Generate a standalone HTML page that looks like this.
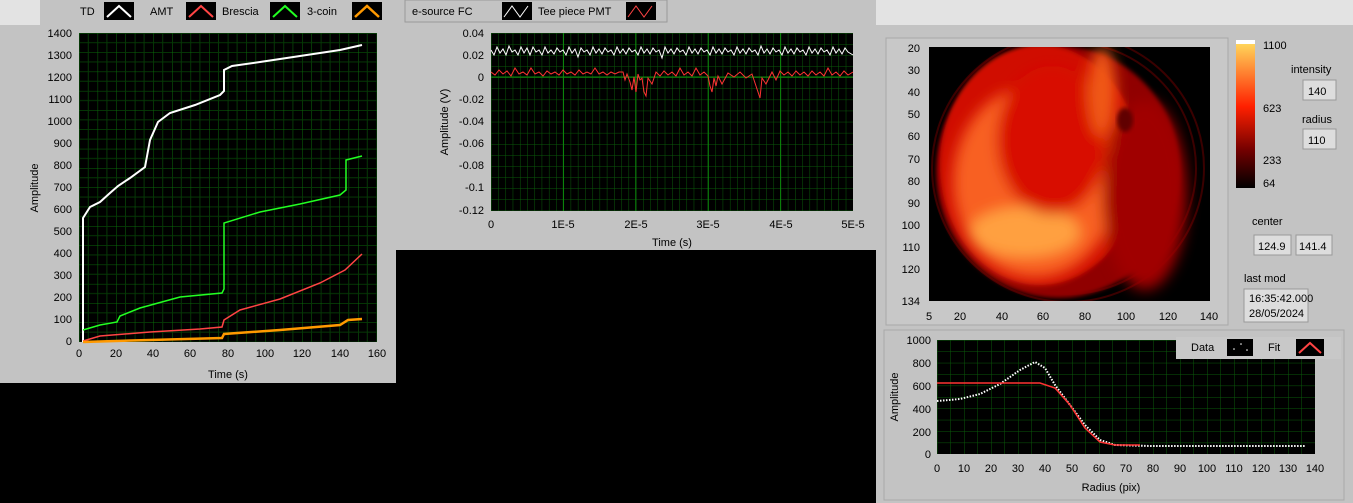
<!DOCTYPE html>
<html><head><style>
body{margin:0;width:1353px;height:503px;background:#000;overflow:hidden;font-family:"Liberation Sans",sans-serif;position:relative}
.p{position:absolute;background:#c3c3c3}
svg text{font-family:"Liberation Sans",sans-serif;font-size:11px;fill:#000}
</style></head><body>
<div class="p" style="left:876px;top:0;width:477px;height:25px;background:#e3e3e3"></div>
<div class="p" style="left:0;top:0;width:40px;height:25px;background:#e3e3e3"></div>
<svg width="1353" height="503" style="position:absolute;left:0;top:0">
<defs>
<pattern id="g1" width="18.6" height="19.3" patternUnits="userSpaceOnUse" x="79" y="33"><rect width="18.6" height="19.3" fill="#000"/><path d="M0 0H18.6M0 0V19.3" stroke="#0a6a0a" stroke-width="1"/><path d="M0 9.6H18.6M9.3 0V19.3" stroke="#063806" stroke-width="1"/></pattern>
<pattern id="g2" width="7.24" height="11.1" patternUnits="userSpaceOnUse" x="491" y="33"><rect width="7.24" height="11.1" fill="#000"/><path d="M0 0H7.24M0 0V11.1" stroke="#0a5a0a"/></pattern>
<pattern id="g3" width="13.5" height="11.4" patternUnits="userSpaceOnUse" x="937" y="340"><rect width="13.5" height="11.4" fill="#000"/><path d="M0 0H13.5M0 0V11.4" stroke="#0a5a0a"/></pattern>
<linearGradient id="cb" x1="0" y1="0" x2="0" y2="1"><stop offset="0" stop-color="#ffe060"/><stop offset="0.45" stop-color="#ff2000"/><stop offset="0.75" stop-color="#700000"/><stop offset="1" stop-color="#000"/></linearGradient>
<clipPath id="ic"><rect x="929" y="47" width="281" height="254"/></clipPath>
<filter id="bl" x="-20%" y="-20%" width="140%" height="140%"><feGaussianBlur stdDeviation="7"/></filter>
<filter id="bl2"><feGaussianBlur stdDeviation="2"/></filter>
</defs>
<rect x="40" y="0" width="356" height="25" fill="#c3c3c3"/>
<text x="80" y="15">TD</text><rect x="104" y="2" width="30" height="18" fill="#000"/><path d="M107 17L119 6L131 17" stroke="#fff" stroke-width="2" fill="none"/>
<text x="150" y="15">AMT</text><rect x="186" y="2" width="30" height="18" fill="#000"/><path d="M189 17L201 6L213 17" stroke="#f44" stroke-width="2" fill="none"/>
<text x="222" y="15">Brescia</text><rect x="270" y="2" width="30" height="18" fill="#000"/><path d="M273 17L285 6L297 17" stroke="#2f2" stroke-width="2" fill="none"/>
<text x="307" y="15">3-coin</text><rect x="352" y="2" width="30" height="18" fill="#000"/><path d="M355 17L367 6L379 17" stroke="#f90" stroke-width="2.5" fill="none"/>
<rect x="0" y="25" width="396" height="358" fill="#c3c3c3"/>
<rect x="79" y="33" width="298" height="309" fill="url(#g1)"/>
<g text-anchor="end"><text x="72" y="37">1400</text><text x="72" y="59">1300</text><text x="72" y="81">1200</text><text x="72" y="103">1100</text><text x="72" y="125">1000</text><text x="72" y="147">900</text><text x="72" y="169">800</text><text x="72" y="191">700</text><text x="72" y="213">600</text><text x="72" y="235">500</text><text x="72" y="257">400</text><text x="72" y="279">300</text><text x="72" y="301">200</text><text x="72" y="323">100</text><text x="72" y="345">0</text></g>
<g text-anchor="middle"><text x="79" y="357">0</text><text x="116" y="357">20</text><text x="153" y="357">40</text><text x="190" y="357">60</text><text x="228" y="357">80</text><text x="265" y="357">100</text><text x="302" y="357">120</text><text x="340" y="357">140</text><text x="377" y="357">160</text><text x="228" y="378">Time (s)</text></g>
<text x="38" y="188" transform="rotate(-90 38 188)" text-anchor="middle">Amplitude</text>
<path d="M83 342V218L90 207L100 202L110 193L118 186L130 178L145 167L150 140L158 122L170 113L195 105L220 95L224 91V70L232 66L260 62L300 56L340 50L362 45" stroke="#fff" stroke-width="2" fill="none"/>
<path d="M83 330L100 325L117 322L120 316L140 308L180 297L222 293L224 289V223L260 212L300 204L340 195L346 190V160L362 156" stroke="#2f2" stroke-width="1.5" fill="none"/>
<path d="M83 341L100 336L150 332L200 329L222 327L224 320L240 310L280 299L320 283L345 270L362 254" stroke="#f44" stroke-width="1.5" fill="none"/>
<path d="M83 342L150 340L222 338L224 334L280 330L340 325L348 320L362 319" stroke="#f90" stroke-width="2.5" fill="none"/>
<rect x="396" y="0" width="480" height="250" fill="#c3c3c3"/>
<rect x="405" y="0" width="262" height="22" fill="#c3c3c3" stroke="#9a9a9a"/>
<text x="412" y="15">e-source FC</text><rect x="502" y="2" width="30" height="18" fill="#000"/><path d="M504 17L512 6L520 17L528 6" stroke="#fff" fill="none"/>
<text x="538" y="15">Tee piece PMT</text><rect x="626" y="2" width="30" height="18" fill="#000"/><path d="M628 17L636 6L644 17L652 6" stroke="#f44" fill="none"/>
<rect x="491" y="33" width="362" height="178" fill="url(#g2)"/>
<path d="M563.4 33V211M635.8 33V211M708.2 33V211M780.6 33V211M491 77H853" stroke="#0c8a0c"/>
<g text-anchor="end"><text x="484" y="37">0.04</text><text x="484" y="59">0.02</text><text x="484" y="81">0</text><text x="484" y="103">-0.02</text><text x="484" y="125">-0.04</text><text x="484" y="147">-0.06</text><text x="484" y="169">-0.08</text><text x="484" y="191">-0.1</text><text x="484" y="214">-0.12</text></g>
<g text-anchor="middle"><text x="491" y="228">0</text><text x="563" y="228">1E-5</text><text x="636" y="228">2E-5</text><text x="708" y="228">3E-5</text><text x="781" y="228">4E-5</text><text x="853" y="228">5E-5</text><text x="672" y="246">Time (s)</text></g>
<text x="448" y="122" transform="rotate(-90 448 122)" text-anchor="middle">Amplitude (V)</text>
<path d="M491 50L494 55L497 47L500 53L503 49L506 55L509 46L512 52L515 50L518 55L521 47L524 53L527 48L530 55L533 47L536 52L539 50L542 55L545 47L548 53L551 50L554 54L557 48L560 52L563 50L566 55L569 47L572 53L575 49L578 57L581 48L584 52L587 50L590 55L593 47L596 53L599 49L602 54L605 48L608 52L611 50L614 55L617 47L620 53L623 49L626 54L629 48L632 52L635 50L638 55L641 47L644 53L647 49L650 54L653 48L656 52L659 50L662 58L665 47L668 53L671 49L674 54L677 48L680 52L683 50L686 55L689 47L692 53L695 49L698 54L701 48L704 52L707 50L710 55L713 47L716 53L719 49L722 54L725 48L728 52L731 50L734 55L737 47L740 53L743 49L746 54L749 48L752 52L755 50L758 55L761 46L764 53L767 49L770 54L773 48L776 52L779 50L782 55L785 47L788 53L791 49L794 54L797 48L800 52L803 50L806 55L809 47L812 53L815 49L818 54L821 48L824 52L827 50L830 55L833 47L836 53L839 49L842 54L845 48L848 52L853 55" stroke="#fff" fill="none"/>
<path d="M491 72L495 75L499 70L503 74L507 71L511 76L515 68L519 74L523 72L527 75L531 68L535 74L539 72L543 76L547 71L551 74L555 72L559 75L563 70L567 74L571 72L575 75L579 70L583 74L587 72L591 74L595 68L599 74L603 72L607 75L611 72L615 74L619 72L623 72L625 80L627 74L630 82L632 90L634 77L636 92L638 74L640 80L642 78L644 92L646 96L648 78L652 84L656 72L660 76L664 71L668 75L672 72L676 76L680 68L684 75L688 72L692 76L696 68L700 75L704 72L708 76L710 86L712 92L714 78L716 86L718 76L722 84L728 73L734 77L740 72L746 78L752 74L756 86L760 98L762 78L766 84L772 72L776 80L780 71L784 75L788 72L792 76L796 71L800 75L804 72L808 76L812 71L816 75L820 72L824 76L828 68L832 75L836 72L840 76L844 71L848 75L853 72" stroke="#f33" fill="none"/>
<rect x="876" y="25" width="477" height="478" fill="#c3c3c3"/>
<rect x="886" y="38" width="342" height="287" fill="#c8c8c8" stroke="#a8a8a8"/>
<rect x="929" y="47" width="281" height="254" fill="#000"/>
<g clip-path="url(#ic)">
<ellipse cx="1068" cy="168" rx="136" ry="134" fill="none" stroke="#3a0000" stroke-width="2"/>
<ellipse cx="1068" cy="168" rx="128" ry="126" fill="none" stroke="#3a0000" stroke-width="2"/>
<ellipse cx="1058" cy="172" rx="122" ry="126" fill="#900400" filter="url(#bl2)"/>
<ellipse cx="1040" cy="165" rx="100" ry="120" fill="#d00c00" filter="url(#bl2)"/>
<g filter="url(#bl)">
<ellipse cx="1035" cy="182" rx="82" ry="96" fill="#f86020"/>
<ellipse cx="1025" cy="232" rx="55" ry="25" fill="#ffa040"/>
<ellipse cx="1052" cy="140" rx="55" ry="74" fill="#d81000"/>
<ellipse cx="1102" cy="92" rx="14" ry="45" fill="#f05818"/>
<ellipse cx="1145" cy="195" rx="42" ry="95" fill="#a00600"/>
</g>
<ellipse cx="1125" cy="120" rx="8" ry="12" fill="#600000" filter="url(#bl2)"/>
</g>
<g text-anchor="end"><text x="920" y="52">20</text><text x="920" y="74">30</text><text x="920" y="96">40</text><text x="920" y="118">50</text><text x="920" y="140">60</text><text x="920" y="163">70</text><text x="920" y="185">80</text><text x="920" y="207">90</text><text x="920" y="229">100</text><text x="920" y="251">110</text><text x="920" y="273">120</text><text x="920" y="305">134</text></g>
<g text-anchor="middle"><text x="929" y="320">5</text><text x="960" y="320">20</text><text x="1002" y="320">40</text><text x="1043" y="320">60</text><text x="1085" y="320">80</text><text x="1126" y="320">100</text><text x="1168" y="320">120</text><text x="1209" y="320">140</text></g>
<rect x="1236" y="40" width="19" height="148" fill="url(#cb)"/><rect x="1236" y="40" width="19" height="4" fill="#fff"/>
<text x="1263" y="49">1100</text><text x="1263" y="112">623</text><text x="1263" y="164">233</text><text x="1263" y="187">64</text>
<text x="1291" y="73">intensity</text><rect x="1303" y="80" width="33" height="20" fill="#ddd" stroke="#999"/><text x="1308" y="95">140</text>
<text x="1302" y="123">radius</text><rect x="1303" y="129" width="33" height="20" fill="#ddd" stroke="#999"/><text x="1308" y="144">110</text>
<text x="1252" y="225">center</text><rect x="1254" y="235" width="37" height="20" fill="#ddd" stroke="#999"/><text x="1258" y="250">124.9</text><rect x="1296" y="235" width="36" height="20" fill="#ddd" stroke="#999"/><text x="1299" y="250">141.4</text>
<text x="1244" y="282">last mod</text><rect x="1244" y="289" width="64" height="33" fill="#ddd" stroke="#999"/><text x="1249" y="302">16:35:42.000</text><text x="1249" y="317">28/05/2024</text>
<rect x="884" y="330" width="460" height="170" fill="#c3c3c3" stroke="#a8a8a8"/>
<rect x="937" y="340" width="378" height="114" fill="url(#g3)"/>
<rect x="1176" y="337" width="165" height="22" fill="#c8c8c8"/>
<text x="1191" y="351">Data</text><rect x="1227" y="339" width="26" height="17" fill="#000"/><circle cx="1234" cy="349" r="0.8" fill="#fff"/><circle cx="1241" cy="344" r="0.8" fill="#fff"/><circle cx="1247" cy="350" r="0.8" fill="#fff"/>
<text x="1268" y="351">Fit</text><rect x="1296" y="339" width="28" height="17" fill="#000"/><path d="M1299 353L1310 343L1321 353" stroke="#f44" stroke-width="2" fill="none"/>
<g text-anchor="end"><text x="931" y="344">1000</text><text x="931" y="367">800</text><text x="931" y="390">600</text><text x="931" y="413">400</text><text x="931" y="436">200</text><text x="931" y="458">0</text></g>
<g text-anchor="middle"><text x="937" y="472">0</text><text x="964" y="472">10</text><text x="991" y="472">20</text><text x="1018" y="472">30</text><text x="1045" y="472">40</text><text x="1072" y="472">50</text><text x="1099" y="472">60</text><text x="1126" y="472">70</text><text x="1153" y="472">80</text><text x="1180" y="472">90</text><text x="1207" y="472">100</text><text x="1234" y="472">110</text><text x="1261" y="472">120</text><text x="1288" y="472">130</text><text x="1315" y="472">140</text><text x="1111" y="491">Radius (pix)</text></g>
<text x="898" y="397" transform="rotate(-90 898 397)" text-anchor="middle">Amplitude</text>
<path d="M937 401L960 399L980 394L1000 384L1020 370L1035 362L1045 368L1055 385L1070 405L1085 425L1100 440L1115 445L1150 446L1305 446" stroke="#fff" stroke-width="2" stroke-dasharray="1.5 1.5" fill="none"/>
<path d="M937 383L1040 383L1055 388L1070 405L1085 428L1100 442L1115 445L1140 445" stroke="#f33" stroke-width="1.5" fill="none"/>
</svg>
</body></html>
